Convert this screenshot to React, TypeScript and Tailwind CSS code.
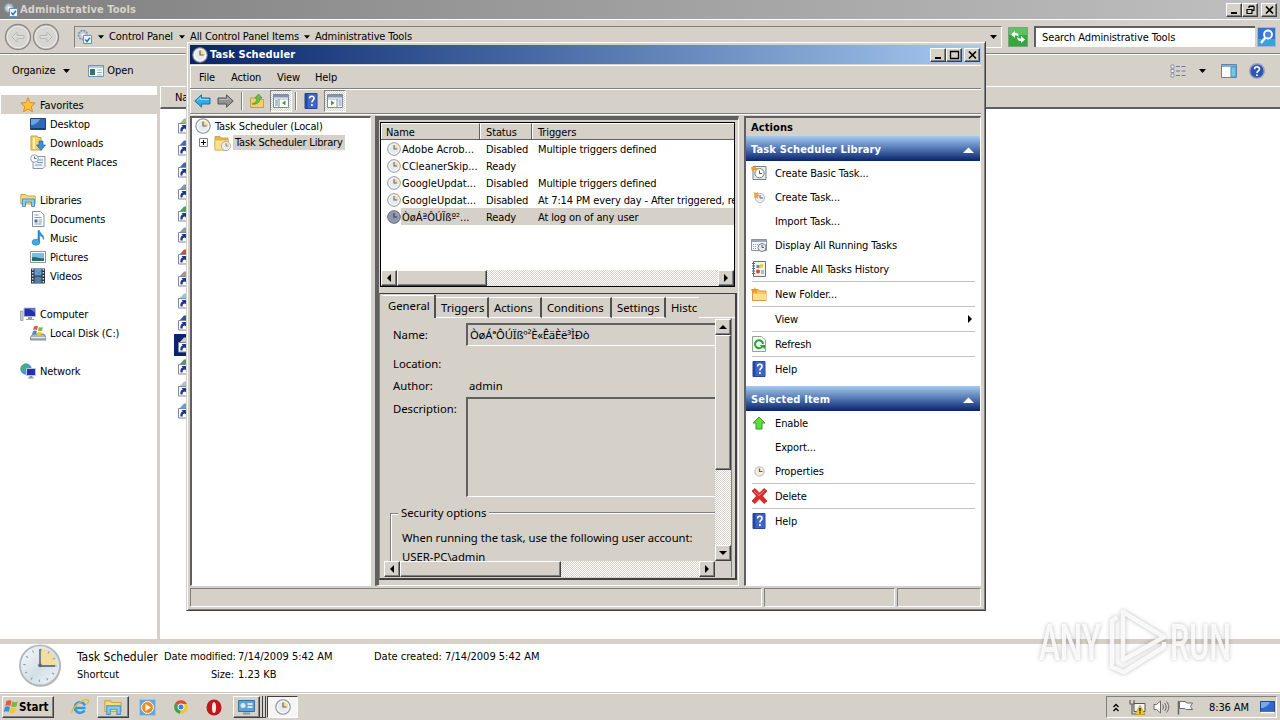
import React from "react";

const raised =
  "bg-[#d5d0c8] border border-t-white border-l-white border-r-[#404040] border-b-[#404040] shadow-[inset_-1px_-1px_0_#808080]";
const sunken = "border border-t-[#808080] border-l-[#808080] border-r-white border-b-white";
const track = "bg-[repeating-conic-gradient(#ffffff_0_25%,#d5d0c8_0_50%)] bg-[length:2px_2px]";

type IconProps = { size?: number; dark?: boolean; className?: string };

const Clock = ({ size = 16, dark, className = "" }: IconProps) => (
  <svg width={size} height={size} viewBox="0 0 16 16" className={"shrink-0 " + className}>
    <circle cx="8" cy="8" r="7.2" fill={dark ? "#8d93a8" : "#e6eaec"} stroke={dark ? "#596080" : "#8c9297"} strokeWidth="1.1" />
    <path d="M8 8V2.3A5.7 5.7 0 0 1 13.7 8z" fill={dark ? "#9a99a2" : "#f4dc9c"} />
    <circle cx="8" cy="8" r="5.7" fill="none" stroke={dark ? "#a5aabb" : "#fff"} strokeWidth=".8" />
    <path d="M8 3.5V8h3.6" fill="none" stroke={dark ? "#333a5c" : "#5f666c"} strokeWidth="1.2" />
  </svg>
);

const BigClock = () => (
  <svg width="44" height="44" viewBox="0 0 44 44">
    <defs>
      <linearGradient id="face" x1="0" y1="0" x2="1" y2="1">
        <stop offset="0" stopColor="#f7fafb" />
        <stop offset=".55" stopColor="#d3e0e8" />
        <stop offset="1" stopColor="#f4f6f7" />
      </linearGradient>
    </defs>
    <circle cx="22.6" cy="22.6" r="20.2" fill="#b5b5b5" />
    <circle cx="22" cy="21.4" r="20" fill="url(#face)" stroke="#b3b8bc" strokeWidth="1.8" />
    <path d="M22 21.4V4.500A17 17 0 0 1 39 21.4z" fill="#f3dda3" />
    <circle cx="22" cy="21.4" r="15.500" fill="none" stroke="#8a98a4" strokeWidth="2.500" strokeDasharray="1 7.115" />
    <path d="M22 5v17h15" fill="none" stroke="#6d7a85" strokeWidth="1.800" />
    <circle cx="22" cy="21.4" r="1.800" fill="#59656f" />
  </svg>
);

const HelpBook = () => (
  <svg width="14" height="16" viewBox="0 0 14 16">
    <path d="M1 .5h12v15H1z" fill="#3f67c8" stroke="#24489c" />
    <path d="M1 .5h2.500v15H1z" fill="#27479c" />
    <path d="M5.500 5.500c0-3 4.500-3 4.500-.3C10 7.200 7.900 7 7.900 9.500M7.900 11v2" fill="none" stroke="#fff" strokeWidth="1.6" />
  </svg>
);

const Folder = ({ className = "" }: IconProps) => (
  <svg width="16" height="16" viewBox="0 0 16 16" className={"shrink-0 " + className}>
    <path d="M1 1.500h5L7.500 3H14v12H1z" fill="#e5b64a" stroke="#c5963a" strokeWidth=".8" />
    <path d="M1 5h13.500v10H1z" fill="#fbe08c" stroke="#d9aa48" strokeWidth=".6" />
  </svg>
);

const Gears = () => (
  <svg width="16" height="16" viewBox="0 0 16 16" className="shrink-0">
    <circle cx="6" cy="6" r="4.500" fill="#b9cbd6" stroke="#7797aa" strokeWidth="1.500" strokeDasharray="2 1" />
    <circle cx="6" cy="6" r="1.800" fill="#eef3f6" />
    <path d="M6.500 6.500h8v8h-8z" fill="#eef7fd" stroke="#5b96bd" />
    <path d="M8.300 10.500l1.700 2 3-3.800" fill="none" stroke="#2676b8" strokeWidth="1.500" />
  </svg>
);

const Caret = ({ className = "", size = 7 }: IconProps) => (
  <svg width={size} height="4" viewBox="0 0 7 4" className={"shrink-0 " + className}>
    <path d="M0 0h7L3.500 4z" />
  </svg>
);

const Arrow = ({ dir }: { dir: "up" | "down" | "left" | "right" }) => {
  const d = {
    up: "M4 2L8 6H0z",
    down: "M0 2h8L4 6z",
    left: "M6 0v8L2 4z",
    right: "M2 0v8l4-4z",
  }[dir];
  return (
    <svg width="8" height="8" viewBox="0 0 8 8">
      <path d={d} />
    </svg>
  );
};

const ConsoleIcon = ({ flip }: { flip?: boolean }) => (
  <svg width="16" height="14" viewBox="0 0 16 14">
    <path d="M.5.500h15v13H.5z" fill="#fff" stroke="#7d8ca5" />
    <path d="M1 1h14v2.500H1z" fill="#8193b3" />
    <path d="M1 5h14" stroke="#a8b2c4" />
    <path d={flip ? "M10 5v8" : "M6 5v8"} stroke="#7d8ca5" />
    <path d={flip ? "M11.500 7h3M11.500 9h3M11.500 11h3" : "M2 7h3M2 9h3M2 11h3"} stroke="#6682b5" />
    <path d={flip ? "M4 6.500v5L7.500 9z" : "M12.500 6.500v5L9 9z"} fill="#3b9c45" />
  </svg>
);

const BlockArrow = ({ gray }: { gray?: boolean }) => (
  <svg width="17" height="14" viewBox="0 0 17 14" className={gray ? "-scale-x-100" : ""}>
    <path d="M.8 7L7.500.8V4H16v6H7.500v3.200z" fill={gray ? "#929292" : "#39a9e2"} stroke={gray ? "#555" : "#1673ad"} />
    <path d="M3 6.500L6.500 3.500V5.500H15" fill="none" stroke={gray ? "#bbb" : "#9bdcfa"} />
  </svg>
);

const WinFlag = ({ size = 18 }: IconProps) => (
  <svg width={size} height={size} viewBox="0 0 18 18" className="shrink-0">
    <path d="M3.500 3c2-1.200 3.500-1 5 0L7.300 8c-1.600-1-3.200-1-5 0z" fill="#e8582c" />
    <path d="M9.300 3.400c1.800 1 3.500 1 5.400 0L13.500 8.400c-2 1-3.600.9-5.400 0z" fill="#79b843" />
    <path d="M2 9c1.800-1 3.400-1 5 0l-1.200 5c-1.600-1-3.200-1-5 0z" fill="#3d8fd6" />
    <path d="M7.900 9.400c1.700 1 3.400 1 5.300 0l-1.200 5c-1.900 1-3.600 1-5.300 0z" fill="#f7c32f" />
  </svg>
);

const navIcons: Record<string, React.ReactNode> = {
  Favorites: (
    <path d="M8 .8l2.100 4.800 5.100.5-3.900 3.500 1.200 5.200L8 12.100l-4.500 2.700 1.200-5.200L.8 6.100l5.100-.5z" fill="#fbc23c" stroke="#e08a22" />
  ),
  Desktop: (
    <>
      <path d="M.5 2.500h15v11H.5z" fill="#2e68b8" stroke="#1e4578" />
      <path d="M1 3h9C8 7 4 9 1 9z" fill="#6ba6e0" />
      <path d="M1 12h14v1.500H1z" fill="#1b3d6e" />
    </>
  ),
  Downloads: (
    <>
      <path d="M1 1h6l1 1.500h3V15H1z" fill="#f5d26e" stroke="#cb9b3c" />
      <path d="M4 3v11" stroke="#fff3b8" strokeWidth="2" />
      <path d="M9 6h4v4h2.500L11 15.500 6.500 10H9z" fill="#3c8fd5" stroke="#2367a8" strokeWidth=".7" />
    </>
  ),
  "Recent Places": (
    <>
      <path d="M4 2.500h11v10l-2 2H3v-8z" fill="#eef3f8" stroke="#8898a8" />
      <path d="M7 6h6M7 8.500h6M5 11h7" stroke="#7b97b8" />
      <circle cx="4.500" cy="4.500" r="3.800" fill="#f6f8fa" stroke="#98a4ae" />
      <path d="M4.500 2.500v2h2" fill="none" stroke="#667" />
    </>
  ),
  Libraries: (
    <>
      <path d="M.8 2.500h5L7 4h8.200v8H.8z" fill="#f7db7a" stroke="#d0a446" />
      <path d="M2.500 7h12v7.500h-3V10h-6v4.500h-3z" fill="#8fcdec" stroke="#4796c4" />
    </>
  ),
  Documents: (
    <>
      <path d="M2.500.5h8l3.500 3.500v11.500H2.500z" fill="#fff" stroke="#8090a0" />
      <path d="M4.500 4h4M4.500 6.500h7M8.500 9h3.500M8.500 11h3.500M4.500 13h7" stroke="#8098b4" />
      <path d="M4.500 8.500h3v3h-3z" fill="#3d6da8" />
    </>
  ),
  Music: (
    <>
      <path d="M8 .5h1.500c.5 3.500 5 4 4 9-.7-2.700-2-3.700-4-3.900v7H8z" fill="#3295d6" stroke="#2076b5" strokeWidth=".6" />
      <ellipse cx="6" cy="12.200" rx="3.900" ry="3" fill="#46a8e4" stroke="#2076b5" strokeWidth=".6" />
    </>
  ),
  Pictures: (
    <>
      <path d="M.5 2.500h15v11H.5z" fill="#fff" stroke="#8896a4" />
      <path d="M2 4h12v8H2z" fill="#78bfe8" />
      <path d="M2 8.500c4-1.500 8 2 12 .5v3H2z" fill="#2c6b5c" />
    </>
  ),
  Videos: (
    <>
      <path d="M1 .5h14v15H1z" fill="#28333f" />
      <path d="M4.500 1h7v6.500h-7z" fill="#5aa3d4" />
      <path d="M4.500 8.500h7V15h-7z" fill="#3f84b8" />
      <path d="M6 3l3 3 1.500-3M6 10l3 3 1.500-3" fill="none" stroke="#b5695a" />
      <path d="M2.700 1v14M13.300 1v14" stroke="#dce4ea" strokeWidth="1.500" strokeDasharray="1.500 1.500" />
    </>
  ),
  Computer: (
    <>
      <path d="M.5 5h2.500v9.500H.5z" fill="#c9d0d4" stroke="#87919a" strokeWidth=".7" />
      <path d="M4 2h11.500v8.500H4z" fill="#2330b4" stroke="#b8bec8" />
      <path d="M9 2.500h6v4z" fill="#5c75e0" />
      <path d="M8 11h4v2h2v1H6v-1h2z" fill="#9aa0a8" />
    </>
  ),
  "Local Disk (C:)": (
    <>
      <path d="M3 9h11l2 3v3H.5v-3z" fill="#a9b5bc" stroke="#707b84" strokeWidth=".8" />
      <path d="M1 12.500h14.500" stroke="#e6ecef" />
      <path d="M4 1.500c2-1 3-.8 4 0L7 5c-1.200-.8-2.500-.8-4 0z" fill="#e8582c" />
      <path d="M9 2c1.500.7 2.500.7 4 0l-1 3.500c-1.500.7-2.700.7-4 0z" fill="#79b843" />
      <path d="M3 6c1.500-.8 2.700-.8 4 0l-1 3.500c-1.200-.8-2.500-.8-4 0z" fill="#3d8fd6" />
      <path d="M7.800 6.400c1.300.7 2.700.7 4 0L11 10c-1.400.7-2.900.7-4.200 0z" fill="#f7c32f" />
    </>
  ),
  Network: (
    <>
      <circle cx="6" cy="6" r="5.300" fill="#3fa0d8" stroke="#2c79a8" strokeWidth=".6" />
      <path d="M2 3c3-3 5-1 4 1S3 7 1.500 8z" fill="#4fb35a" />
      <path d="M6.500 5.500h9v7h-9z" fill="#2330b4" stroke="#c3c9d2" />
      <path d="M9.500 13h3v1.500h1.500v1H8v-1h1.500z" fill="#8a93a0" />
    </>
  ),
};

const nav: { name: string; child?: boolean }[][] = [
  [{ name: "Favorites" }, { name: "Desktop", child: true }, { name: "Downloads", child: true }, { name: "Recent Places", child: true }],
  [
    { name: "Libraries" },
    { name: "Documents", child: true },
    { name: "Music", child: true },
    { name: "Pictures", child: true },
    { name: "Videos", child: true },
  ],
  [{ name: "Computer" }, { name: "Local Disk (C:)", child: true }],
  [{ name: "Network" }],
];

const shortcutColors = ["#9fb89a", "#4a66b8", "#3b68b8", "#7a95b0", "#3aa86a", "#8a98a8", "#d84848", "#989898", "#9cc3de", "#3350a0", "#c9ccd2", "#4f9a58", "#b8bec8", "#5aa4d4"];

const Shortcut = ({ color }: { color: string }) => (
  <svg width="16" height="16" viewBox="0 0 16 16" className="shrink-0">
    <path d="M3 5l4-4.500h7V8H3z" fill={color} />
    <path d="M1.500 5.500h9v9.500h-9z" fill="#fff" stroke="#8088a8" />
    <path d="M3.500 13.500C3 10 4.500 8.500 6 8.500L4.500 7H9.500v5L8 10.500c-2 0-2.500 1-2.500 3z" fill="#1c3590" />
  </svg>
);

const WinButton = ({ kind }: { kind: "min" | "max" | "restore" | "close" }) => (
  <div className={"flex h-[14px] w-4 items-center justify-center " + raised}>
    <svg width="11" height="10" viewBox="0 0 11 10" fill="none" stroke="#000">
      {kind === "min" && <path d="M2 8h6" strokeWidth="2" />}
      {kind === "max" && <path d="M1.500 1.500h8v7h-8zM1 1.500h9" strokeWidth="1.3" />}
      {kind === "restore" && <path d="M4 3V1.500h5v4H7M2 4.500h5v4H2zM4 1h5" strokeWidth="1.200" />}
      {kind === "close" && <path d="M2 1.500l7 7M9 1.500l-7 7" strokeWidth="1.600" />}
    </svg>
  </div>
);

const Explorer = () => (
  <div className="flex h-[693px] flex-col">
    <div className="flex h-[19px] items-center bg-linear-to-r from-[#808080] to-[#c0c0c0] pr-[3px] pl-[3px] text-[#d8d4cc]">
      <Gears />
      <span className="ml-px font-bold tracking-[0.1px]">Administrative Tools</span>
      <div className="ml-auto flex">
        <WinButton kind="min" />
        <WinButton kind="restore" />
        <div className="w-[3px]" />
        <WinButton kind="close" />
      </div>
    </div>

    <div className="flex h-[35px] items-center border-t border-b border-t-white border-b-[#808080] pl-1">
      <div className="flex">
        {[0, 1].map((i) => (
          <svg key={i} width="28" height="28" viewBox="0 0 28 28" className={i ? "-scale-x-100" : ""}>
            <circle cx="14" cy="14" r="12.500" fill="#c9c7c3" stroke="#8b8985" strokeWidth="1.300" />
            <circle cx="14" cy="14" r="10.800" fill="#d8d6d2" stroke="#efeeec" />
            <path d="M8 14l5-5v3.500h7v3h-7V19z" fill="#dddbd7" stroke="#bab8b4" />
          </svg>
        ))}
      </div>
      <div className={"ml-[14px] flex h-[22px] w-[928px] items-center pl-[2px] " + sunken}>
        <Gears />
        <Caret size={6} className="ml-[5px]" />
        <span className="ml-[5px] w-[65px]">Control Panel</span>
        <Caret size={6} className="ml-[5px]" />
        <span className="ml-[5px] w-[109px]">All Control Panel Items</span>
        <Caret size={6} className="ml-[5px]" />
        <span className="ml-[5px]">Administrative Tools</span>
        <Caret className="mr-1 ml-auto" />
      </div>
      <svg width="20" height="20" viewBox="0 0 20 20" className="ml-[6px]">
        <path d="M.5.500h19v19H.5z" fill="#35a83c" stroke="#7f9f80" />
        <path d="M1 1h18v7H1z" fill="#5cc45e" />
        <path d="M3 7.500L7 4v2c3 0 4 1.500 3.500 4-1-1.500-2-1.500-3.500-1.500v2.500zM17 12.500L13 16v-2c-3 0-4-1.500-3.500-4 1 1.500 2 1.500 3.500 1.500V9z" fill="#fff" />
      </svg>
      <div className="ml-[6px] flex h-[21px] w-[221px] items-center border-t-2 border-l-2 border-[#606060] bg-white pl-[6px]">Search Administrative Tools</div>
      <svg width="19" height="20" viewBox="0 0 19 20" className="ml-[2px]">
        <path d="M.5.500h18v19H.5z" fill="#3273cf" stroke="#a5b5d0" />
        <path d="M1 12h17v7H1z" fill="#35a4dd" />
        <circle cx="11" cy="7.500" r="4" fill="#4c86dc" stroke="#fff" strokeWidth="1.800" />
        <path d="M8 11l-4 5" stroke="#fff" strokeWidth="2.400" />
      </svg>
    </div>

    <div className="flex h-8 items-center border-t border-white pl-3">
      <span>Organize</span>
      <Caret className="ml-2" />
      <svg width="16" height="14" viewBox="0 0 16 14" className="ml-[18px]">
        <path d="M.5 1.500h15v11H.5z" fill="#fff" stroke="#7594a8" />
        <path d="M1 2h14v2H1z" fill="#a8cfe4" />
        <path d="M2 5h5v6H2z" fill="#376f6c" />
        <path d="M9 6h5M9 8.500h5M9 11h5" stroke="#a5b2bd" />
      </svg>
      <span className="ml-[3px]">Open</span>
      <svg width="16" height="14" viewBox="0 0 16 14" className="ml-auto">
        <path d="M1 1h3v3H1zM1 5.500h3v3H1zM1 10h3v3H1z" fill="#fff" stroke="#8791a2" />
        <path d="M6 2.500h4M6 7h4M6 11.500h4M11.500 2.500h4M11.500 7h4M11.500 11.500h4" stroke="#6c7ba0" />
      </svg>
      <Caret className="ml-[13px]" />
      <svg width="16" height="14" viewBox="0 0 16 14" className="ml-[15px]">
        <path d="M.5.500h15v13H.5z" fill="#fff" stroke="#5a87aa" />
        <path d="M1 1h14v2H1z" fill="#7cb0d4" />
        <path d="M10 3h5v10h-5z" fill="#78c3e4" stroke="#4a8fb8" />
      </svg>
      <svg width="16" height="16" viewBox="0 0 16 16" className="mr-[15px] ml-3">
        <circle cx="8" cy="8" r="7.300" fill="#2d55b5" stroke="#9aa6bd" strokeWidth="1.400" />
        <path d="M5.500 6.200c0-3.200 5-3.200 5-.2C10.500 8 8 7.800 8 10M8 11.300v1.700" fill="none" stroke="#fff" strokeWidth="1.600" />
      </svg>
    </div>

    <div className="flex min-h-0 flex-1">
      <div className="flex w-[157px] flex-col gap-[19px] bg-white pt-[9px]">
        {nav.map((group) => (
          <div key={group[0].name}>
            {group.map((item) => (
              <div
                key={item.name}
                className={
                  "ml-px flex h-[19px] items-center gap-1 " +
                  (item.child ? "pl-[29px] " : "pl-[19px] ") +
                  (item.name === "Favorites" ? "bg-[#d5d0c8]" : "")
                }
              >
                <svg width="16" height="16" viewBox="0 0 16 16">
                  {navIcons[item.name]}
                </svg>
                <span className="pt-[2px]">{item.name}</span>
              </div>
            ))}
          </div>
        ))}
      </div>
      <div className="w-[3px]" />
      <div className="min-w-0 flex-1 bg-white">
        <div className="mb-[6px] flex h-[23px] items-center border-t border-b-2 border-l border-t-white border-b-[#606060] border-l-white bg-[#d5d0c8] pt-[2px] pl-[14px]">Name</div>
        <div className="flex flex-col">
          {shortcutColors.map((c, i) => (
            <div key={i} className={"flex h-[21.9px] items-center " + (i === 10 ? "ml-[14px] w-6 bg-[#0a246a] pl-[3px]" : "pl-[17px]")}>
              <Shortcut color={c} />
            </div>
          ))}
        </div>
      </div>
    </div>

    <div className="h-[5px]" />
    <div className="flex h-[49px] border-b border-[#c8c4bc] bg-white pl-[18px] tracking-normal">
      <BigClock />
      <div className="ml-[15px] w-[87px] pt-[4px]">
        <div className="text-[12px] leading-[18px]">Task Scheduler</div>
        <div className="leading-[18px]">Shortcut</div>
      </div>
      <div className="w-[70px] pt-[4px] text-right leading-[18px] tracking-[-0.12px]">
        <div>Date modified:</div>
        <div>Size:</div>
      </div>
      <div className="ml-1 w-[136px] pt-[4px] leading-[18px]">
        <div>7/14/2009 5:42 AM</div>
        <div>1.23 KB</div>
      </div>
      <div className="pt-[4px] leading-[18px]">Date created: 7/14/2009 5:42 AM</div>
    </div>
  </div>
);

const tasks = [
  { name: "Adobe Acrob...", status: "Disabled", trigger: "Multiple triggers defined" },
  { name: "CCleanerSkip...", status: "Ready", trigger: "" },
  { name: "GoogleUpdat...", status: "Disabled", trigger: "Multiple triggers defined" },
  { name: "GoogleUpdat...", status: "Disabled", trigger: "At 7:14 PM every day - After triggered, repeat" },
  { name: "ÒøÁªÔÚÏßº²...", status: "Ready", trigger: "At log on of any user", selected: true },
];

const TaskList = () => (
  <div className="flex h-[165px] w-[355px] flex-col border border-black bg-white">
    <div className="flex h-[17px] border-b border-[#606060] bg-[#d5d0c8] leading-[17px]">
      <div className="w-[99px] border-t border-l border-white border-r border-r-[#606060] pl-1">Name</div>
      <div className="w-[52px] border-t border-l border-white border-r border-r-[#606060] pl-[5px]">Status</div>
      <div className="flex-1 border-t border-l border-white pl-[5px]">Triggers</div>
    </div>
    {tasks.map((t, i) => (
      <div key={i} className="flex h-[17px] items-center overflow-hidden">
        <Clock size={14} dark={t.selected} className="ml-[6px]" />
        <div className={"flex h-full flex-1 items-center pt-[2px] " + (t.selected ? "bg-[#d5d0c8]" : "")}>
          <span className="w-[85px] pl-px tracking-normal">{t.name}</span>
          <span className="w-[52px]">{t.status}</span>
          <span>{t.trigger}</span>
        </div>
      </div>
    ))}
    <div className={"mt-auto flex h-4 " + track}>
      <div className={"flex w-4 items-center justify-center " + raised}>
        <Arrow dir="left" />
      </div>
      <div className={"w-[90px] " + raised} />
      <div className={"ml-auto flex w-4 items-center justify-center " + raised}>
        <Arrow dir="right" />
      </div>
    </div>
  </div>
);

const tabs = [
  { name: "Triggers", w: "w-[53px]" },
  { name: "Actions", w: "w-[53px]" },
  { name: "Conditions", w: "w-[70px]" },
  { name: "Settings", w: "w-[54px]" },
];

const TaskDetails = () => (
  <div className="-ml-px flex h-[287px] w-[358px] flex-col border-t border-l border-r-2 border-b-2 border-t-[#404040] border-r-[#404040] border-b-[#404040] border-l-[#808080] pt-px pl-[2px] font-['Noto_Sans'] text-[11.3px] tracking-normal">
    <div className="flex h-[23px] items-end">
      <div className="flex h-[23px] w-[54px] items-center border-r-2 border-[#505050] pb-[2px] pl-[6px] shadow-[inset_0_1px_0_white]">General</div>
      {tabs.map((t) => (
        <div key={t.name} className={"flex h-[21px] items-center border-t border-b border-white border-r-2 border-r-[#505050] pl-[5px] tracking-[-0.05px] " + t.w}>
          {t.name}
        </div>
      ))}
      <div className="flex h-[21px] w-[33px] items-center overflow-hidden border-t border-white pl-[5px]">Histc</div>
      <div className="h-px flex-1 bg-white" />
    </div>
    <div className="flex h-[259px] w-[350px] border-r border-[#808080] pl-[2px]">
      <div className="flex w-[331px] flex-col">
        <div className="h-[243px] overflow-hidden pl-[9px]">
          <div className="mt-[5px] flex h-[23px] items-center">
            <span className="w-[73px]">Name:</span>
            <div className="flex h-[23px] flex-1 items-center border-t-2 border-b border-l-2 border-t-[#606060] border-b-white border-l-[#606060] pl-[2px] tracking-[-0.2px]">
              ÒøÁªÔÚÏßº²È«ÊäÈë³ÌÐò
            </div>
          </div>
          <div className="mt-[7px] flex h-[22px] items-center">Location:</div>
          <div className="flex h-[22px] items-center">
            <span className="w-[76px]">Author:</span>admin
          </div>
          <div className="flex h-[100px]">
            <span className="w-[73px] pt-[5px]">Description:</span>
            <div className="flex-1 border-t-2 border-b border-l-2 border-t-[#606060] border-b-white border-l-[#606060]" />
          </div>
          <div className="-ml-[3px] mt-[8px] flex h-4 items-center">
            <div className="mt-[7px] h-2 w-2 border-t border-l border-[#808080] shadow-[inset_1px_1px_0_white]" />
            <span className="px-[3px]">Security options</span>
            <div className="h-[2px] flex-1 border-t border-b border-t-[#808080] border-b-white" />
          </div>
          <div className="-ml-[3px] h-16 border-l border-[#808080] pt-[7px] pl-[11px] shadow-[inset_1px_0_0_white]">
            <div className="leading-[19px] tracking-[-0.04px]">When running the task, use the following user account:</div>
            <div className="leading-5">USER-PC\admin</div>
          </div>
        </div>
        <div className={"flex h-4 " + track}>
          <div className={"flex w-4 items-center justify-center " + raised}>
            <Arrow dir="left" />
          </div>
          <div className={"w-[161px] " + raised} />
          <div className={"ml-auto flex w-4 items-center justify-center " + raised}>
            <Arrow dir="right" />
          </div>
        </div>
      </div>
      <div className="flex w-4 flex-col pt-px">
        <div className={"flex h-[242px] flex-col " + track}>
          <div className={"flex h-4 items-center justify-center " + raised}>
            <Arrow dir="up" />
          </div>
          <div className={"h-[135px] " + raised} />
          <div className={"mt-auto flex h-4 items-center justify-center " + raised}>
            <Arrow dir="down" />
          </div>
        </div>
        <div className="flex-1 bg-[#d5d0c8]" />
      </div>
    </div>
  </div>
);

const actionIcons: Record<string, React.ReactNode> = {
  basic: (
    <svg width="16" height="16" viewBox="0 0 16 16">
      <path d="M2 1.500h13v13H2z" fill="#e8eaec" stroke="#778089" />
      <circle cx="8.500" cy="8.200" r="4.600" fill="#fff" stroke="#6f7a84" />
      <path d="M8.500 5.500v3h2.500" fill="none" stroke="#4d5964" />
      <path d="M0 2l3 1L4 0l1 3h3L5 4.500 5.500 7 3.500 5 1 6.500z" fill="#f09a2e" />
    </svg>
  ),
  create: (
    <svg width="16" height="16" viewBox="0 0 16 16">
      <circle cx="9" cy="9" r="4.600" fill="#eceef2" stroke="#b4b8c8" />
      <path d="M9 6v3h3" fill="none" stroke="#5c6280" />
      <path d="M2.500 3l2.500 1 2-1v2.500l2 1-2 1V10L5 8.500 3 9l.5-2.500z" fill="#f3a233" />
    </svg>
  ),
  running: (
    <svg width="16" height="16" viewBox="0 0 16 16">
      <path d="M.5 2.500h15v11H.5z" fill="#f7f8fa" stroke="#8893a3" />
      <path d="M1 3h14v2H1z" fill="#9aa7b8" />
      <path d="M2 7.500h5M2 9.500h4M2 11.500h4" stroke="#8a96a4" strokeDasharray="1 1" />
      <circle cx="11" cy="10.500" r="4" fill="#eceef0" stroke="#737d88" />
      <path d="M11 8v2.500h2" fill="none" stroke="#4d5964" />
    </svg>
  ),
  history: (
    <svg width="16" height="16" viewBox="0 0 16 16">
      <path d="M2.500.5h12v15h-12z" fill="#f5f2e2" stroke="#66748a" />
      <path d="M1 2.500h3M1 5h3M1 7.500h3M1 10h3M1 12.500h3" stroke="#5b6675" />
      <path d="M5.500 4h3v3h-3z" fill="#5b87c9" />
      <circle cx="10.500" cy="5" r="2" fill="#eec84a" />
      <circle cx="7" cy="10.500" r="2" fill="#cc4a3c" />
      <path d="M10 10h3M10 12h3" stroke="#5b87c9" />
    </svg>
  ),
  folder: (
    <svg width="16" height="16" viewBox="0 0 16 16">
      <path d="M1.500 3.500H7l1 1.500h7v9.500H1.500z" fill="#f6c95c" stroke="#d69b38" />
      <path d="M2 8h13v6H2z" fill="#fce08e" />
      <path d="M0 3l3 .5L4 1l1 2.500h3L5.500 5 6 8 4 6 1.500 7z" fill="#f0962c" />
    </svg>
  ),
  refresh: (
    <svg width="16" height="16" viewBox="0 0 16 16">
      <path d="M1.500.5h9l4 3.500v11.500h-13z" fill="#f1f8f1" stroke="#90a592" />
      <path d="M11.300 10.500A4 4 0 1 1 12 8" fill="none" stroke="#2f9e3d" strokeWidth="2" />
      <path d="M8.500 9h5.500v4z" fill="#2f9e3d" />
    </svg>
  ),
  enable: (
    <svg width="16" height="16" viewBox="0 0 16 16">
      <path d="M8 2l6 6h-3v6H5V8H2z" fill="#5fdc3c" stroke="#2f9e28" />
    </svg>
  ),
  props: (
    <svg width="16" height="16" viewBox="0 0 16 16">
      <circle cx="8.500" cy="8.500" r="4.700" fill="#f3eed4" stroke="#b2b6c0" />
      <path d="M8.500 5.500v3h3" fill="none" stroke="#56608a" strokeWidth="1.200" />
    </svg>
  ),
  delete: (
    <svg width="17" height="16" viewBox="0 0 17 16" className="shrink-0">
      <path d="M1 3l3-2.500 4.500 4.700L13 .5 16 3l-4.500 5 4.500 5-3 2.500-4.500-4.700L4 15.500 1 13l4.500-5z" fill="#dd2b2b" stroke="#a51b1b" strokeWidth=".7" />
      <path d="M3 3l5 4.500L13.500 2.500" fill="none" stroke="#f58a80" />
    </svg>
  ),
  help: <HelpBook />,
};

type Action = { label: string; icon?: string; sep?: boolean; sub?: boolean };

const libraryActions: Action[] = [
  { label: "Create Basic Task...", icon: "basic" },
  { label: "Create Task...", icon: "create" },
  { label: "Import Task..." },
  { label: "Display All Running Tasks", icon: "running" },
  { label: "Enable All Tasks History", icon: "history" },
  { label: "New Folder...", icon: "folder", sep: true },
  { label: "View", sep: true, sub: true },
  { label: "Refresh", icon: "refresh", sep: true },
  { label: "Help", icon: "help", sep: true },
];

const itemActions: Action[] = [
  { label: "Enable", icon: "enable" },
  { label: "Export..." },
  { label: "Properties", icon: "props" },
  { label: "Delete", icon: "delete", sep: true },
  { label: "Help", icon: "help", sep: true },
];

const ActionGroup = ({ title, items }: { title: string; items: Action[] }) => (
  <div>
    <div className="flex h-[25px] items-center justify-between bg-linear-to-b from-[#a6caf0] via-[#5478b4] to-[#0a246a] pt-[2px] pr-[6px] pl-[5px] font-bold tracking-[0.15px] text-white">
      {title}
      <svg width="11" height="6" viewBox="0 0 11 6">
        <path d="M0 6L5.500.5 11 6z" fill="#fff" />
      </svg>
    </div>
    {items.map((a) => (
      <React.Fragment key={a.label}>
        {a.sep && <div className="mr-[5px] ml-[6px] h-px bg-[#c4c2bf]" />}
        <div className="flex h-6 items-center pl-[5px]">
          <span className="flex w-6 items-center">
            <span className="flex w-4 justify-center">{a.icon && actionIcons[a.icon]}</span>
          </span>
          <span className="pt-px">{a.label}</span>
          {a.sub && (
            <span className="mr-1.5 ml-auto">
              <Arrow dir="right" />
            </span>
          )}
        </div>
      </React.Fragment>
    ))}
  </div>
);

const TaskScheduler = () => (
  <div className="absolute top-[41px] left-[186px] flex h-[570px] w-[800px] flex-col border border-t-[#d5d0c8] border-r-[#404040] border-b-[#404040] border-l-[#d5d0c8] bg-[#d5d0c8] pt-[3px] pr-1 pb-[2px] pl-[3px] shadow-[inset_1px_1px_0_white,inset_-1px_-1px_0_#808080]">
    <div className="flex h-[19px] items-center bg-linear-to-r from-[#0a246a] to-[#a6caf0] pr-[1px] pl-[2px] font-bold tracking-[0.1px] text-white">
      <Clock />
      <span className="ml-[2px]">Task Scheduler</span>
      <div className="ml-auto flex">
        <WinButton kind="min" />
        <WinButton kind="max" />
        <div className="w-[2px]" />
        <WinButton kind="close" />
      </div>
    </div>
    <div className="mt-px flex h-[23px] items-center border-t border-l border-white pt-px pl-2">
      <span className="w-8">File</span>
      <span className="w-[46px]">Action</span>
      <span className="w-[38px]">View</span>
      <span>Help</span>
    </div>
    <div className="flex h-[26px] items-center border-t border-b border-t-[#808080] border-b-[#808080] pl-1 shadow-[inset_1px_1px_0_white,0_1px_0_white]">
      <BlockArrow />
      <span className="ml-1.5">
        <BlockArrow gray />
      </span>
      <div className="mr-[6px] ml-[7px] h-[18px] w-[2px] border-l border-[#808080] bg-white" />
      <svg width="16" height="16" viewBox="0 0 16 16">
        <path d="M1.500 5h5L8 6.500h6.500v8h-13z" fill="#f3cf69" stroke="#c99f42" />
        <path d="M3 11c4-1 5-4 5-6H6l3.500-4L13 5h-2c0 4-3 7-8 6z" fill="#6cc046" stroke="#3c8d2c" strokeWidth=".7" />
      </svg>
      <div className={"ml-[5px] flex h-[22px] w-[22px] items-center justify-center " + sunken + " " + track}>
        <ConsoleIcon />
      </div>
      <div className="mx-[3px] h-[18px] w-[2px] border-l border-[#808080] bg-white" />
      <span className="ml-1">
        <HelpBook />
      </span>
      <div className={"ml-[6px] flex h-[22px] w-[22px] items-center justify-center " + sunken + " " + track}>
        <ConsoleIcon flip />
      </div>
    </div>

    <div className="mt-[2px] flex h-[470px]">
      <div className="w-[181px] border-t-2 border-r border-b border-l-2 border-t-[#606060] border-r-white border-b-white border-l-[#606060] bg-white pl-[3px]">
        <div className="flex h-4 items-center">
          <Clock />
          <span className="ml-1 pt-px">Task Scheduler (Local)</span>
        </div>
        <div className="flex h-[17px] items-center">
          <svg width="9" height="9" viewBox="0 0 9 9" className="ml-1">
            <path d="M.5.500h8v8h-8z" fill="#fff" stroke="#808080" />
            <path d="M2 4.500h5M4.500 2v5" stroke="#000" />
          </svg>
          <span className="ml-[6px] flex w-4">
            <Folder />
            <Clock size={10} className="mt-[6px] -ml-[9px]" />
          </span>
          <span className="ml-[3px] flex h-[15px] items-center bg-[#d5d0c8] px-[2px] tracking-[-0.18px]">Task Scheduler Library</span>
        </div>
      </div>

      <div className="ml-1 w-[364px] border-t-4 border-r border-b border-l-4 border-t-[#606060] border-r-white border-b-white border-l-[#606060] bg-[#d5d0c8] pt-[2px] pl-px">
        <TaskList />
        <div className="mt-[6px]">
          <TaskDetails />
        </div>
      </div>

      <div className="ml-[5px] flex-1 border-t-2 border-r border-b border-l-2 border-t-[#606060] border-r-white border-b-white border-l-[#606060] bg-white">
        <div className="h-[18px] bg-[#d5d0c8] pl-[5px] leading-[19px] font-bold tracking-[0.1px]">Actions</div>
        <ActionGroup title="Task Scheduler Library" items={libraryActions} />
        <div className="h-[5px]" />
        <ActionGroup title="Selected Item" items={itemActions} />
      </div>
    </div>

    <div className="mt-[2px] flex h-[19px] gap-[2px]">
      <div className={"w-[572px] " + sunken} />
      <div className={"w-[131px] " + sunken} />
      <div className={"flex-1 " + sunken} />
    </div>
  </div>
);

const Taskbar = () => (
  <div className="flex h-[27px] items-center border-t border-white pl-[2px]">
    <div className={"flex h-[22px] w-[52px] items-center text-[11.5px] font-bold tracking-normal " + raised}>
      <WinFlag />
      <span className="-ml-[2px]">Start</span>
    </div>
    <div className="ml-[17px] w-[26px]">
      <svg width="18" height="18" viewBox="0 0 18 18">
        <path d="M4.500 10h10M14 7.500A5.300 5.300 0 1 0 13.500 12.500" fill="none" stroke="#2f9be0" strokeWidth="2.600" />
        <path d="M1 15C0 10 13 0 17 2c1 1 0 3-1 4" fill="none" stroke="#e8b83a" strokeWidth="1.400" />
      </svg>
    </div>
    <div className={"flex h-[22px] w-8 items-center justify-center " + raised}>
      <svg width="18" height="18" viewBox="0 0 16 16">
        {navIcons.Libraries}
      </svg>
    </div>
    <svg width="17" height="17" viewBox="0 0 17 17" className="ml-[10px]">
      <path d="M.5.500h16v16H.5z" fill="#5ea6dc" stroke="#a9c6dc" />
      <circle cx="8.500" cy="8.500" r="6" fill="#f08a1d" stroke="#fff" />
      <path d="M6.500 5v7l5.500-3.500z" fill="#fff" />
    </svg>
    <svg width="14" height="14" viewBox="1 1 14 14" className="ml-[18px]">
      <circle cx="8" cy="8" r="6.800" fill="#f5c52d" />
      <path d="M8 8L2.100 4.600A6.800 6.800 0 0 1 14 5H8z" fill="#df4a3b" />
      <path d="M8 8l-1 6.700A6.800 6.800 0 0 1 2.100 4.600z" fill="#36a351" />
      <circle cx="8" cy="8" r="3.100" fill="#3f80e8" stroke="#fff" />
    </svg>
    <svg width="16" height="17" viewBox="0 0 16 17" className="ml-[18px]">
      <ellipse cx="8" cy="8.500" rx="7.500" ry="8" fill="#c2161d" />
      <ellipse cx="8" cy="8.500" rx="2.100" ry="5.500" fill="#f2e6e6" />
    </svg>
    <div className={"ml-[11px] flex h-[22px] w-[27px] items-center justify-center " + raised}>
      <svg width="17" height="15" viewBox="0 0 17 15">
        <path d="M.5.500h16v11H.5z" fill="#5da1d8" stroke="#3a719f" />
        <circle cx="5" cy="5.500" r="2.500" fill="#d7ecf9" />
        <path d="M9.500 4h5M9.500 7h5" stroke="#fff" strokeWidth="1.500" />
        <path d="M5 12.500h7v2H5z" fill="#8696a4" />
      </svg>
    </div>
    <div className="h-[22px] w-[3px] border-r border-b border-[#404040]" />
    <div className="h-[22px] w-[3px] border-r border-b border-[#404040]" />
    <div className="ml-px flex h-[22px] w-[31px] items-center justify-center border-t border-l border-[#404040] border-r border-b border-r-white border-b-white bg-[#f6f5f3]">
      <Clock />
    </div>
    <div className={"mr-[3px] ml-auto flex h-[22px] w-[171px] items-center pl-[6px] " + sunken}>
      <svg width="6" height="9" viewBox="0 0 6 9" fill="none" stroke="#000" strokeWidth="1.300">
        <path d="M.5 4L3 1.500 5.500 4M.5 8L3 5.500 5.500 8" />
      </svg>
      <svg width="17" height="16" viewBox="0 0 17 16" className="ml-[10px]">
        <path d="M5 4.500h11v8H5z" fill="#f5f5f3" stroke="#555" />
        <path d="M1 1v4h4V1M3 5v10h5" fill="none" stroke="#666" strokeWidth="1.200" />
        <path d="M11 6.500l5 9H6z" fill="#f7cf26" stroke="#a98a10" strokeWidth=".7" />
        <path d="M11 9v3.500M11 13.300v1.200" stroke="#000" strokeWidth="1.200" />
      </svg>
      <svg width="17" height="14" viewBox="0 0 17 14" className="ml-[7px]" fill="none" stroke="#6a6a6a">
        <path d="M1 4.500h2.500L7.500 1v12L3.500 9.500H1z" fill="#fff" />
        <path d="M9.500 4.500c1.300 1.500 1.300 3.500 0 5M11.500 3c2.200 2.500 2.200 5.500 0 8M13.500 1.500c3 3.500 3 7.500 0 11" />
      </svg>
      <svg width="17" height="15" viewBox="0 0 17 15" className="ml-[7px]">
        <path d="M1.500 1v13.500" stroke="#666" strokeWidth="1.500" />
        <path d="M2.500 1.500h6l1 1.500h6l-2 3.500 2 3H9L8 8.500H2.500z" fill="#fff" stroke="#6a6a6a" />
      </svg>
      <span className="ml-[15px] pt-px">8:36 AM</span>
      <svg width="15" height="13" viewBox="0 0 15 13" className="mr-[1px] ml-auto">
        <path d="M.5.500h14v10H.5z" fill="#2e68c8" stroke="#244a80" />
        <path d="M1 1h9C8 5 4 7 1 7z" fill="#74ace8" />
        <path d="M1 11.500h13" stroke="#fff" strokeWidth="1.500" />
      </svg>
    </div>
  </div>
);

const Watermark = () => (
  <svg width="200" height="76" viewBox="0 0 200 76" className="absolute top-[604px] left-[1036px] drop-shadow-[0_0_2px_rgba(0,0,0,0.3)]" fill="white" fillOpacity=".85">
    <text x="3" y="56" fontFamily="Roboto" fontSize="50" fontWeight="500" textLength="62" lengthAdjust="spacingAndGlyphs">
      ANY
    </text>
    <text x="134" y="56" fontFamily="Roboto" fontSize="50" fontWeight="500" textLength="61" lengthAdjust="spacingAndGlyphs">
      RUN
    </text>
    <path
      d="M81 13l-5 4v46l12 5 40-25v-5M87 8l41 25-41 23z"
      fill="none"
      stroke="#fff"
      strokeOpacity=".85"
      strokeWidth="4.500"
      strokeLinejoin="round"
    />
  </svg>
);

export default function App() {
  return (
    <div className="relative h-[720px] w-[1280px] overflow-hidden bg-[#d5d0c8] font-['DejaVu_Sans_Condensed','DejaVu_Sans',sans-serif] text-[11px] leading-[14px] tracking-[-0.12px] whitespace-nowrap text-black">
      <Explorer />
      <Taskbar />
      <TaskScheduler />
      <Watermark />
    </div>
  );
}
